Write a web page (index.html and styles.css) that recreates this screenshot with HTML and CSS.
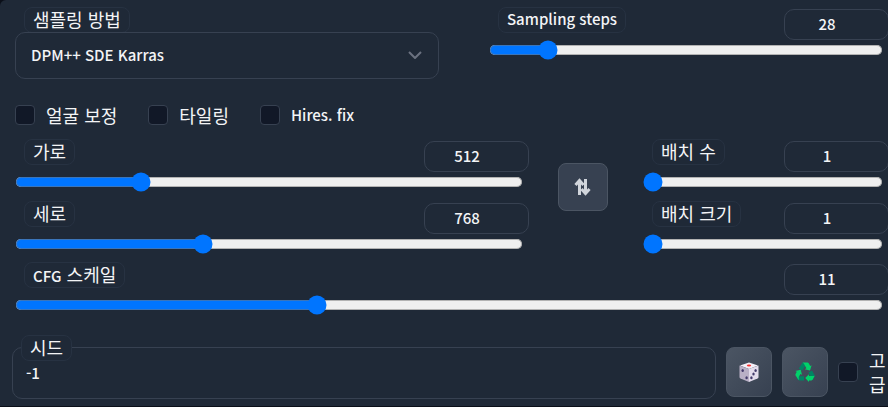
FILE: index.html
```
<!DOCTYPE html>
<html lang="ko">
<head>
  <meta charset="UTF-8" />
  <meta name="viewport" content="width=device-width, initial-scale=1.0"/>
  <title>txt2img</title>
  <link rel="stylesheet" href="styles.css">
</head>
<body>
  <div class="panel">
    <div class="row sampler-row">
      <div class="dropdown">
        <label class="chip" for="sampler">샘플링 방법</label>
        <div class="select-wrap">
          <select id="sampler">
            <option>DPM++ SDE Karras</option>
          </select>
          <svg class="chevron" viewBox="0 0 14 8"><path d="M1 1l6 6 6-6"/></svg>
        </div>
      </div>
      <div class="slider">
        <div class="slider-head">
          <label class="chip latin" for="steps">Sampling steps</label>
          <input class="number" type="number" value="28" aria-label="Sampling steps">
        </div>
        <input class="range" id="steps" type="range" min="1" max="206" value="28">
      </div>
    </div>

    <div class="checks">
      <label class="check"><input type="checkbox"><span>얼굴 보정</span></label>
      <label class="check"><input type="checkbox"><span>타일링</span></label>
      <label class="check latin"><input type="checkbox"><span>Hires. fix</span></label>
    </div>

    <div class="row size-row">
      <div class="stack">
        <div class="slider">
          <div class="slider-head">
            <label class="chip" for="width">가로</label>
            <input class="number" type="number" value="512" aria-label="가로">
          </div>
          <input class="range" id="width" type="range" min="32" max="2048" step="8" value="512">
        </div>
        <div class="slider">
          <div class="slider-head">
            <label class="chip" for="height">세로</label>
            <input class="number" type="number" value="768" aria-label="세로">
          </div>
          <input class="range" id="height" type="range" min="32" max="2048" step="8" value="768">
        </div>
      </div>
      <button class="swap" aria-label="가로 세로 바꾸기">
        <svg viewBox="0 0 18 18" width="18" height="18">
          <path d="M5.500 17V3M1.500 7l4-4.500 4 4.500M11.500 1v14M7.500 11l4 4.500 4-4.500"/>
        </svg>
      </button>
      <div class="stack">
        <div class="slider">
          <div class="slider-head">
            <label class="chip" for="batch-count">배치 수</label>
            <input class="number" type="number" value="1" aria-label="배치 수">
          </div>
          <input class="range" id="batch-count" type="range" min="1" max="100" value="1">
        </div>
        <div class="slider">
          <div class="slider-head">
            <label class="chip" for="batch-size">배치 크기</label>
            <input class="number" type="number" value="1" aria-label="배치 크기">
          </div>
          <input class="range" id="batch-size" type="range" min="1" max="8" value="1">
        </div>
      </div>
    </div>

    <div class="slider cfg">
      <div class="slider-head">
        <label class="chip" for="cfg"><span class="latin">CFG</span> 스케일</label>
        <input class="number" type="number" value="11" aria-label="CFG 스케일">
      </div>
      <input class="range" id="cfg" type="range" min="1" max="30" step="0.5" value="11">
    </div>

    <div class="seed-row">
      <div class="seed">
        <label class="chip" for="seed">시드</label>
        <input id="seed" type="text" value="-1">
      </div>
      <button class="tool" aria-label="랜덤 시드">
        <svg viewBox="0 0 20 20" width="20" height="20">
          <path fill="#f4eff8" d="M10 0.500L19 3.500 10 7 1 3.500z"/>
          <path fill="#b9b0c6" d="M.5 3.500L10 7v13L1.500 16.500q-1-.5-1-1.500z"/>
          <path fill="#e2dcec" d="M19.500 3.500L10 7v13l8.500-3.500q1-.5 1-1.500z"/>
          <ellipse fill="#f8312f" cx="10" cy="3.400" rx="2.200" ry="1"/>
          <g fill="#433b6b">
            <ellipse cx="3.700" cy="8.500" rx="1.200" ry="1.500"/>
            <ellipse cx="7.600" cy="15.700" rx="1.200" ry="1.500"/>
            <ellipse cx="16.600" cy="8.500" rx="1.200" ry="1.500"/>
            <ellipse cx="14.500" cy="12" rx="1.200" ry="1.500"/>
            <ellipse cx="12.400" cy="15.700" rx="1.200" ry="1.500"/>
          </g>
        </svg>
      </button>
      <button class="tool" aria-label="시드 재사용">
        <svg viewBox="0 0 20 20" width="20" height="20">
          <path fill="#008463" d="M7.500.5L3.800 6.600l3.500 2.200L10.500 3.500 9 1z"/>
          <path fill="#00d26a" d="M7.500.5h5q.8 0 1.200.8l1.500 2.700 1.400-.7-1.600 5.200-5.200-1.300 1.600-.9L8.800 1.500z"/>
          <path fill="#008463" d="M13.500 10.500l3.500-2 2.700 5-1.700 4.500h-3l1-3z"/>
          <path fill="#00d26a" d="M19.700 13.800l-2.200 4q-.4.700-1.300.7H14V20l-3.800-4 3.800-3.800V14h4.500z"/>
          <path fill="#008463" d="M4 14.200h5v4.300H4L1.500 16z"/>
          <path fill="#00d26a" d="M3.800 18.200L.6 13.500q-.5-.8 0-1.600l1.200-2.100L.3 9l5.400-1.200L7 12.800l-1.500-.7-1.800 3z"/>
        </svg>
      </button>
      <label class="check extra"><input type="checkbox"><span>고급</span></label>
    </div>
  </div>
</body>
</html>
```

FILE: styles.css
```
* {
  box-sizing: border-box;
}
body {
  margin: 0;
  background: #0b0f19;
  color: #f3f4f6;
  font-family: "Noto Sans CJK KR", sans-serif;
  font-size: 18px;
  line-height: 24px;
  overflow-x: hidden;
}
input,
select,
button {
  font-family: inherit;
  color: inherit;
  margin: 0;
}
.latin,
.number,
.select-wrap select,
.seed input {
  font-size: 15px;
  font-weight: 500;
}
.panel {
  background: #1f2937;
  border-radius: 6px 0 0 0;
  padding: 7px 5px 7px 15px;
}
.row {
  display: grid;
}
.sampler-row {
  grid-template-columns: 424fr 394fr;
  column-gap: 50px;
}
.chip {
  display: block;
  width: max-content;
  height: 26px;
  margin-left: 9px;
  padding: 0 8px;
  border: 1px solid #273242;
  border-radius: 8px;
  background: #1f2937;
  line-height: 22px;
}
.select-wrap {
  position: relative;
  margin-top: -1px;
}
.select-wrap select {
  appearance: none;
  display: block;
  width: 100%;
  height: 47px;
  padding: 0 15px 2px;
  border: 1px solid #374151;
  border-radius: 10px;
  background: #1f2937;
}
.chevron {
  position: absolute;
  right: 17px;
  top: 19px;
  width: 14px;
  height: 8px;
  fill: none;
  stroke: #6b7280;
  stroke-width: 2;
}

/* sliders */
.slider-head {
  display: flex;
  justify-content: space-between;
  height: 33px;
  margin-right: -6px;
}
.number {
  appearance: textfield;
  width: 105px;
  height: 31px;
  margin-top: 2px;
  padding: 0 27px 2px 8px;
  border: 1px solid #374151;
  border-radius: 10px;
  background: #1f2937;
  text-align: center;
}
.number::-webkit-inner-spin-button {
  appearance: none;
  margin: 0;
}
.range {
  display: block;
  width: 100%;
  zoom: 1.25;
}

/* checkboxes */
.checks {
  display: flex;
  gap: 31px;
  margin-top: 24px;
}
.check {
  display: flex;
  align-items: center;
  gap: 11px;
}
.check input {
  appearance: none;
  flex: none;
  width: 20px;
  height: 20px;
  border: 1px solid #374151;
  border-radius: 4px;
  background: #111827;
}
.check input:checked {
  background: #0075ff;
}

.size-row {
  grid-template-columns: 508fr 50px 240fr;
  column-gap: 35px;
  margin-top: 12px;
}
.stack {
  display: grid;
  gap: 9px;
}
button {
  display: flex;
  align-items: center;
  justify-content: center;
  padding: 0;
  border: 1px solid #4b5563;
  border-radius: 8px;
  cursor: pointer;
}
.swap {
  height: 48px;
  margin-top: 24px;
  background: #374151;
}
.swap svg {
  fill: none;
  stroke: #d1d5db;
  stroke-width: 3;
}
.cfg {
  margin-top: 8px;
}

/* seed */
.seed-row {
  display: flex;
  gap: 10px;
  margin: 20px -5px 0 -3px;
}
.seed {
  flex: 1;
}
.seed .chip {
  position: relative;
}
.seed input {
  display: block;
  width: 100%;
  height: 52px;
  margin-top: -14px;
  padding: 0 13px 2px;
  border: 1px solid #374151;
  border-radius: 10px;
  background: #1f2937;
}
.tool {
  width: 46px;
  height: 50px;
  margin-top: 12px;
  background: linear-gradient(to bottom right, #4b5563, #374151);
}
.extra {
  width: 50px;
  height: 50px;
  margin-top: 12px;
}
```
